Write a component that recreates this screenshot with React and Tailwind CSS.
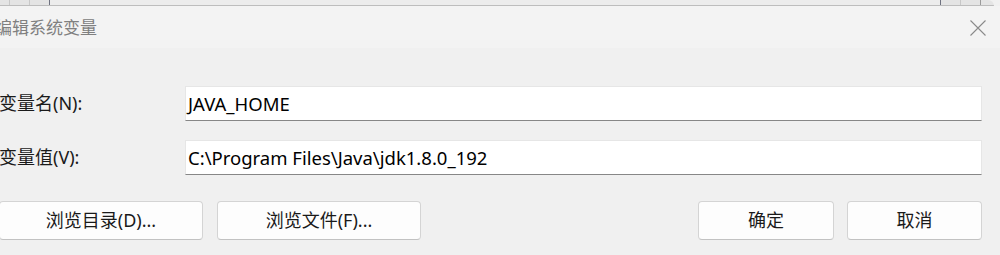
import React from "react";

const font = { fontFamily: '"Noto Sans", "Noto Sans CJK SC", sans-serif' };

function Btn({ children, w }) {
  return (
    <button
      className={`h-[39px] ${w} shrink-0 rounded-[4px] border border-[#d4d4d4] border-b-[#c2c2c2] bg-[#fdfdfd] text-[18px] text-[#1a1a1a] flex items-center justify-center`}
      style={font}
    >
      {children}
    </button>
  );
}

export default function App() {
  return (
    <div className="w-[1000px] h-[255px] overflow-hidden bg-[#f0f0f0] flex flex-col" style={font}>
      {/* background window strip */}
      <div className="h-[6px] flex bg-[#e4e4e4] border-b border-[#bdbdbd] rounded-tr-[8px] mr-[6px]">
        <div className="w-[10px] border-r border-[#c8c8c8]" />
        <div className="w-[20px] border-r border-[#c8c8c8]" />
        <div className="w-[20px] border-r border-[#6f7280]" />
        <div className="flex-1 bg-[#ececec]" />
        <div className="w-[20px] border-l border-[#6f7280]" />
        <div className="w-[20px] border-l border-[#c8c8c8]" />
        <div className="w-[14px] border-l border-[#9a9a9a]" />
      </div>
      {/* title bar */}
      <div className="h-[42px] bg-[#f3f3f3] flex items-center justify-between shrink-0">
        <span className="text-[17px] text-[#808080] ml-[-5px] mt-[2px] whitespace-nowrap">编辑系统变量</span>
        <svg width="16" height="16" viewBox="0 0 16 16" className="mr-[14px] mt-[2px]">
          <path d="M0.5 0.5 L15.5 15.5 M15.5 0.5 L0.5 15.5" stroke="#8a8a8a" strokeWidth="1.1" />
        </svg>
      </div>
      {/* content */}
      <div className="flex flex-col pt-[38px] pr-[18px]">
        <div className="flex items-center h-[35px]">
          <span className="w-[186px] shrink-0 text-[18px] text-[#1a1a1a] ml-[-1px]">变量名(N):</span>
          <div className="flex-1 h-[35px] bg-white border border-[#e6e6e6] border-b-[#878787] flex items-center pl-[2px] text-[18.5px] text-black">
            JAVA_HOME
          </div>
        </div>
        <div className="flex items-center h-[35px] mt-[19px]">
          <span className="w-[186px] shrink-0 text-[18px] text-[#1a1a1a] ml-[-1px]">变量值(V):</span>
          <div className="flex-1 h-[35px] bg-white border border-[#e6e6e6] border-b-[#878787] flex items-center pl-[2px] text-[18.5px] text-black">
            C:\Program Files\Java\jdk1.8.0_192
          </div>
        </div>
        <div className="flex items-center mt-[26px] ml-[-1px]">
          <Btn w="w-[204px]">浏览目录(D)...</Btn>
          <div className="w-[14px]" />
          <Btn w="w-[204px]">浏览文件(F)...</Btn>
          <div className="flex-1" />
          <Btn w="w-[136px]">确定</Btn>
          <div className="w-[13px]" />
          <Btn w="w-[135px]">取消</Btn>
        </div>
      </div>
    </div>
  );
}
